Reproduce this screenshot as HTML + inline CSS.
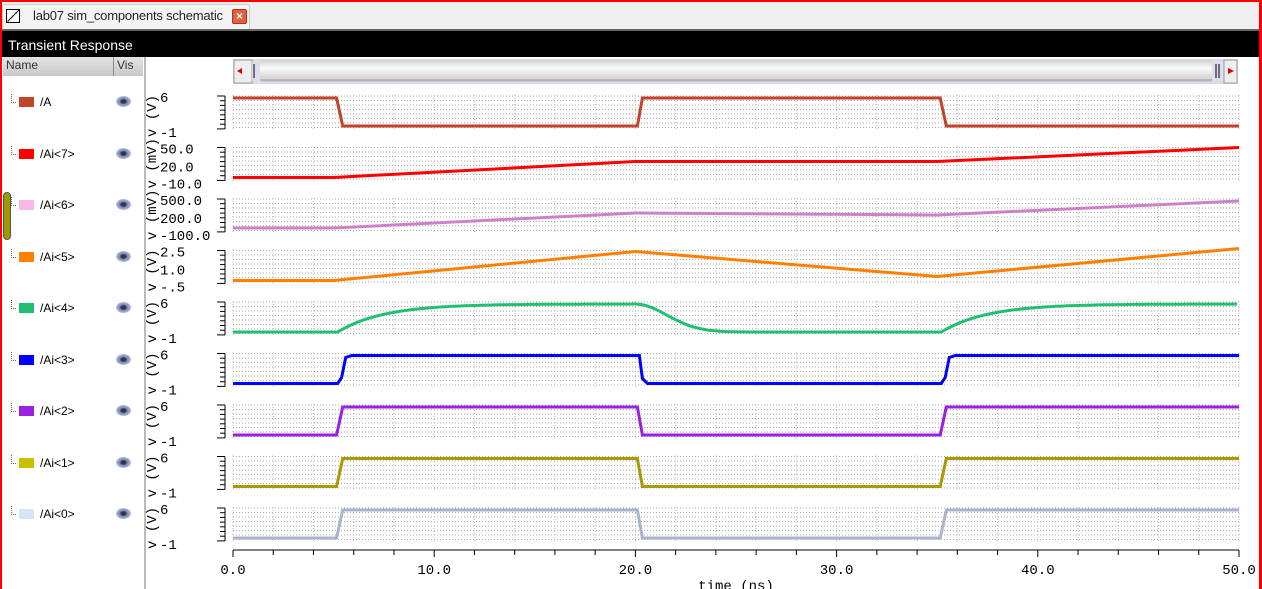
<!DOCTYPE html>
<html><head><meta charset="utf-8"><style>
body{margin:0;width:1262px;height:589px;overflow:hidden;background:#fff;font-family:"Liberation Sans",sans-serif;position:relative}
.abs{position:absolute}
</style></head><body>
<div class="abs" style="left:0;top:0;width:1262px;height:589px;box-sizing:border-box;border:2px solid #f00;border-right-width:3px;border-bottom:none"></div>
<div class="abs" style="left:2px;top:2px;width:1257px;height:27px;background:#efefef"></div>
<div class="abs" style="left:2px;top:4px;width:246px;height:24px;background:#f4f4f4;border:1px solid #ccc;border-bottom:none;border-radius:3px 3px 0 0"></div>
<div class="abs" style="left:6px;top:9px;width:12px;height:12px;border:1px solid #000;background:#fff;overflow:hidden"><div style="position:absolute;left:-2px;top:5px;width:17px;height:1px;background:#000;transform:rotate(-45deg)"></div></div>
<div class="abs" style="left:33px;top:8px;font-size:13px;color:#222;letter-spacing:-0.2px">lab07 sim_components schematic</div>
<div class="abs" style="left:232px;top:9px;width:13px;height:13px;background:#e06040;border:1px solid #b03020;border-radius:2px;color:#fff;font-size:12px;line-height:13px;text-align:center;font-weight:bold">×</div>
<div class="abs" style="left:2px;top:29px;width:1257px;height:2px;background:#666"></div>
<div class="abs" style="left:2px;top:31px;width:1257px;height:26px;background:#000;color:#fff;font-size:14px;line-height:28px;padding-left:6px;box-sizing:border-box">Transient Response</div>
<div class="abs" style="left:2px;top:57px;width:142px;height:532px;background:#fff;border-right:2px solid #bbb"></div>
<div class="abs" style="left:3px;top:57px;width:140px;height:19px;background:linear-gradient(#e4e4e4,#c8c8c8);font-size:12px;color:#333;line-height:16px"><span style="position:absolute;left:3px">Name</span><span style="position:absolute;left:110px;top:0;height:19px;border-left:1px solid #888"></span><span style="position:absolute;left:114px">Vis</span></div>
<div class="abs" style="left:3px;top:192px;width:6px;height:46px;background:#a09800;border:1px solid #555;border-radius:4px"></div>
<div id="left"></div>
<svg class="abs" style="left:0;top:0" width="1262" height="589" id="svg"></svg>
<script>
const names=["/A","/Ai<7>","/Ai<6>","/Ai<5>","/Ai<4>","/Ai<3>","/Ai<2>","/Ai<1>","/Ai<0>"];
const cols=["#c0432a","#ff0000","#d080c8","#ff8000","#20c070","#0000ff","#9b20e0","#a89a00","#a8b4cc"];
const sq=["#c0432a","#ff0000","#f8b8e8","#ff8000","#20c070","#0000ff","#9b20e0","#c8c000","#d8e4f8"];
let h="";
for(let i=0;i<9;i++){const y=95+i*51.5;
h+=`<div class="abs" style="left:11px;top:${y-1}px;width:4px;height:${8}px;border-left:1px dotted #666;border-bottom:1px dotted #666"></div>
<div class="abs" style="left:19px;top:${y+2}px;width:15px;height:10px;background:${sq[i]}"></div>
<div class="abs" style="left:40px;top:${y}px;font-size:12px;color:#000">${names[i].replace(/</g,'&lt;').replace(/>/g,'&gt;')}</div>
<div class="abs" style="left:116px;top:${y+1}px;width:15px;height:11px;border-radius:50%;background:radial-gradient(#334 22%,#7080b0 34%,#b8c0dc 70%,#fff 72%)"></div>`;}
document.getElementById("left").innerHTML=h;
const X=t=>233+t*20.12;
let s=`<rect x="233" y="59" width="1005" height="25" fill="#d8dce2"/>
<rect x="234" y="60" width="18" height="23" fill="#eee" stroke="#999"/><path d="M237 71l5-3v6z" fill="#d00"/>
<rect x="252" y="60" width="10" height="23" rx="3" fill="#dde"/><line x1="254" y1="64" x2="254" y2="78" stroke="#000"/>
<rect x="260" y="60" width="953" height="22" rx="4" fill="url(#g)"/>
<line x1="260" y1="80" x2="1212" y2="80" stroke="#c080c0"/>
<rect x="1212" y="60" width="12" height="23" rx="3" fill="#dde"/><line x1="1216" y1="64" x2="1216" y2="78" stroke="#000"/><line x1="1219" y1="64" x2="1219" y2="78" stroke="#000"/>
<rect x="1224" y="60" width="13" height="23" fill="#eee" stroke="#999"/><path d="M1234 71l-6-3v6z" fill="#d00"/>
<defs><linearGradient id="g" x1="0" y1="0" x2="0" y2="1"><stop offset="0" stop-color="#d0d0d0"/><stop offset=".35" stop-color="#fafafa"/><stop offset="1" stop-color="#c8c8c8"/></linearGradient></defs>`;
const labs=[["6","-1"],["50.0","20.0","-10.0"],["500.0","200.0","-100.0"],["2.5","1.0","-.5"],["6","-1"],["6","-1"],["6","-1"],["6","-1"],["6","-1"]];
const unit=["V","mV","mV","V","V","V","V","V","V"];
function step(T,hi,lo,start){let p=[],lev=start;p.push([0,lev?hi:lo]);[[5.15,5.45],[20.1,20.35],[35.15,35.45]].forEach(([a,b])=>{p.push([a,lev?hi:lo]);lev=!lev;p.push([b,lev?hi:lo]);});p.push([50,lev?hi:lo]);return p;}
for(let i=0;i<9;i++){const T=93+i*51.5, hi=T+5, lo=T+33;
 for(let k=0;k<8;k++){const gy=T+3+k*4.5;s+=`<line x1="233" y1="${gy}" x2="1239" y2="${gy}" stroke="#aaa" stroke-width="1" stroke-dasharray="1,2"/>`;}
 for(let k=0;k<=25;k++){const gx=X(k*2);s+=`<line x1="${gx}" y1="${T+2}" x2="${gx}" y2="${T+36}" stroke="#bbb" stroke-dasharray="1,2"/>`;}
 s+=`<line x1="225" y1="${T+3}" x2="225" y2="${T+36}" stroke="#000"/>`;
 for(let k=0;k<=7;k++){const ty=T+3+k*4.7;s+=`<line x1="${k%7==0?217:220}" y1="${ty}" x2="225" y2="${ty}" stroke="#000"/>`;}
 s+=`<text transform="translate(156 ${T+44}) rotate(-90)" font-family="Liberation Mono,monospace" font-size="14" fill="#000">v (${unit[i]})</text>`;
 const L=labs[i];
 s+=`<text x="160" y="${T+9}" font-family="Liberation Mono,monospace" font-size="14">${L[0]}</text>`;
 if(L.length==3){s+=`<text x="160" y="${T+27}" font-family="Liberation Mono,monospace" font-size="14">${L[1]}</text><text x="160" y="${T+44}" font-family="Liberation Mono,monospace" font-size="14">${L[2]}</text>`;}
 else s+=`<text x="160" y="${T+44}" font-family="Liberation Mono,monospace" font-size="14">${L[1]}</text>`;
 let p;
 if(i==0)p=step(T,hi,lo,1);
 else if(i==1)p=[[0,T+33],[5,T+33],[20,T+17],[35,T+17],[50,T+3]];
 else if(i==2)p=[[0,T+32],[5,T+32],[20,T+17],[35,T+19],[50,T+5]];
 else if(i==3)p=[[0,T+33],[5,T+33],[20,T+4],[35,T+29],[50,T+1]];
 else if(i==4){p=[[0,lo],[5.2,lo]];for(let t=5.2;t<=20;t+=0.3)p.push([t,lo-(lo-hi)*(1-Math.exp(-(t-5.2)/2.3))]);for(let t=20;t<=35.2;t+=0.3)p.push([t,hi+(lo-hi)*(1-Math.exp(-Math.pow((t-20)/2.2,2)))]);p.push([35.2,lo]);for(let t=35.2;t<=50;t+=0.3)p.push([t,lo-(lo-hi)*(1-Math.exp(-(t-35.2)/2.3))]);}
 else if(i==5){p=[[0,lo],[5.2,lo],[5.4,lo-6],[5.6,hi+2],[5.9,hi],[20.2,hi],[20.35,lo-5],[20.6,lo],[35.2,lo],[35.4,lo-6],[35.6,hi+2],[35.9,hi],[50,hi]];}
 else p=step(T,hi,lo,0);
 s+=`<polyline fill="none" stroke="${cols[i]}" stroke-width="3" points="${p.map(q=>X(q[0]).toFixed(1)+","+q[1].toFixed(1)).join(" ")}"/>`;
}
s+=`<line x1="233" y1="550" x2="1239" y2="550" stroke="#000"/>`;
for(let k=0;k<=25;k++){const gx=X(k*2);s+=`<line x1="${gx}" y1="550" x2="${gx}" y2="${k%5==0?557:555}" stroke="#000"/>`;}
for(let k=0;k<=5;k++){s+=`<text x="${X(k*10)}" y="574" text-anchor="middle" font-family="Liberation Mono,monospace" font-size="14">${(k*10).toFixed(1)}</text>`;}
s+=`<text x="736" y="590" text-anchor="middle" font-family="Liberation Mono,monospace" font-size="14">time (ns)</text>`;
document.getElementById("svg").innerHTML=s;
</script>
</body></html>
